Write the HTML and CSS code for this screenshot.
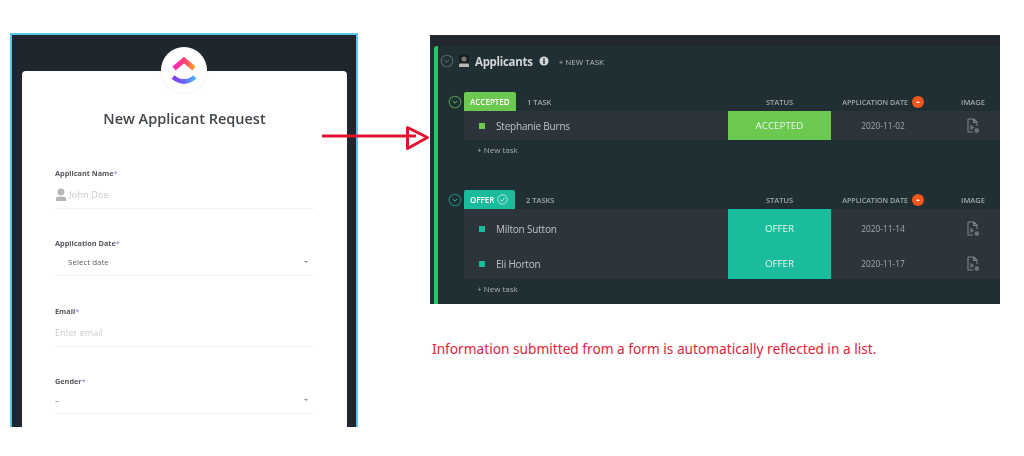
FILE: index.html
```html
<!DOCTYPE html>
<html lang="en">
<head>
    <meta charset="UTF-8">
    <title>New Applicant Request</title>
    <link rel="stylesheet" href="styles.css">
</head>
<body>
    <div class="page">
        <div class="form-window">
            <div class="card">
                <div class="logo">
                    <svg width="30" height="34" viewBox="0 0 30 34">
                        <defs>
                            <linearGradient id="logoTop" x1="0" y1="0" x2="1" y2="0">
                                <stop offset="0" stop-color="#f92bc4"/>
                                <stop offset="0.55" stop-color="#ff3d6e"/>
                                <stop offset="1" stop-color="#ffa02a"/>
                            </linearGradient>
                            <linearGradient id="logoBottom" x1="0" y1="0" x2="1" y2="0">
                                <stop offset="0" stop-color="#8a3ff0"/>
                                <stop offset="0.5" stop-color="#6b63f6"/>
                                <stop offset="1" stop-color="#4cb6fb"/>
                            </linearGradient>
                        </defs>
                        <path d="M5 15.5 L15 7 L25 15.5" fill="none" stroke="url(#logoTop)" stroke-width="5"/>
                        <path d="M4 24 Q15 33 26 24" fill="none" stroke="url(#logoBottom)" stroke-width="4.6"/>
                    </svg>
                </div>
                <h1>New Applicant Request</h1>

                <div class="form-group first">
                    <label>Applicant Name<span class="req">*</span></label>
                    <div class="field placeholder name">
                        <svg class="person" width="12" height="13" viewBox="0 0 12 13">
                            <circle cx="6" cy="4" r="3.4" fill="#b5b5b5"/>
                            <path d="M1 13 V10.4 Q1 8.8 3 8.8 H9 Q11 8.8 11 10.4 V13 Z" fill="#b5b5b5"/>
                        </svg>
                        John Doe
                    </div>
                </div>
                <div class="form-group date">
                    <label>Application Date<span class="req">*</span></label>
                    <div class="field select indented">Select date <span class="caret"></span></div>
                </div>
                <div class="form-group email">
                    <label>Email<span class="req">*</span></label>
                    <div class="field placeholder">Enter email</div>
                </div>
                <div class="form-group gender">
                    <label>Gender<span class="req">*</span></label>
                    <div class="field select">– <span class="caret"></span></div>
                </div>
            </div>
        </div>

        <div class="right-col">
            <div class="list">
                <div class="list-top"></div>
                <div class="list-body">
                    <div class="list-title">
                        <svg class="toggle" width="14" height="14" viewBox="0 0 14 14">
                            <circle cx="7" cy="7" r="5.8" fill="none" stroke="#59666a" stroke-width="1.1"/>
                            <path d="M4.8 6 L7 8.2 L9.2 6" fill="none" stroke="#6d797c" stroke-width="1"/>
                        </svg>
                        <svg class="avatar" width="12" height="14" viewBox="0 0 12 14">
                            <circle cx="6" cy="5" r="5" fill="#161b1e"/>
                            <circle cx="6" cy="5" r="2.6" fill="#7b7470"/>
                            <path d="M1 13 V10.8 Q1 9.4 3 9.4 H9 Q11 9.4 11 10.8 V13 Z" fill="#b9b9b6"/>
                        </svg>
                        <span class="list-name">Applicants</span>
                        <svg class="info" width="10" height="10" viewBox="0 0 10 10">
                            <circle cx="5" cy="5" r="4.6" fill="#cfd3d4"/>
                            <rect x="4.2" y="4.2" width="1.6" height="3.6" fill="#263236"/>
                            <rect x="4.2" y="2.2" width="1.6" height="1.4" fill="#263236"/>
                        </svg>
                        <span class="new-task-top">+ NEW TASK</span>
                    </div>

                    <div class="group accepted">
                        <div class="group-head">
                            <svg class="group-toggle" width="14" height="14" viewBox="0 0 14 14">
                                <circle cx="7" cy="7" r="5.8" fill="none" stroke="#4f9a45" stroke-width="1.1"/>
                                <path d="M4.8 6 L7 8.2 L9.2 6" fill="none" stroke="#6bc950" stroke-width="1"/>
                            </svg>
                            <span class="badge">ACCEPTED</span>
                            <span class="count">1 TASK</span>
                            <span class="col-status">STATUS</span>
                            <span class="col-date">APPLICATION DATE <i class="sort"></i></span>
                            <span class="col-image">IMAGE</span>
                        </div>
                        <div class="row short">
                            <span class="task"><i class="dot"></i>Stephanie Burns</span>
                            <span class="status">ACCEPTED</span>
                            <span class="date-val">2020-11-02</span>
                            <span class="image-val">
                                <svg width="13" height="16" viewBox="0 0 13 16"><path d="M1 1 H7 L10 4 V8 M6 14 H1 V1 M6.6 1.2 V4.4 H9.8" fill="none" stroke="#7e8489" stroke-width="1.1"/><path d="M3.4 6.4 L7.4 9.8 L3.4 12 Z" fill="#6c7277"/><circle cx="9.8" cy="12.6" r="2.4" fill="#6c7277"/></svg>
                            </span>
                        </div>
                        <div class="new-task">+ New task</div>
                    </div>

                    <div class="group offer">
                        <div class="group-head">
                            <svg class="group-toggle" width="14" height="14" viewBox="0 0 14 14">
                                <circle cx="7" cy="7" r="5.8" fill="none" stroke="#1a8a76" stroke-width="1.1"/>
                                <path d="M4.8 6 L7 8.2 L9.2 6" fill="none" stroke="#1abc9c" stroke-width="1"/>
                            </svg>
                            <span class="badge">OFFER
                                <svg width="11" height="11" viewBox="0 0 11 11"><circle cx="5.5" cy="5.5" r="4.7" fill="none" stroke="#cfeee7" stroke-width="0.9"/><path d="M3.4 5.8 L5 7.2 L7.6 3.9" fill="none" stroke="#cfeee7" stroke-width="0.9"/></svg>
                            </span>
                            <span class="count">2 TASKS</span>
                            <span class="col-status">STATUS</span>
                            <span class="col-date">APPLICATION DATE <i class="sort"></i></span>
                            <span class="col-image">IMAGE</span>
                        </div>
                        <div class="row tall">
                            <span class="task"><i class="dot"></i>Milton Sutton</span>
                            <span class="status">OFFER</span>
                            <span class="date-val">2020-11-14</span>
                            <span class="image-val">
                                <svg width="13" height="16" viewBox="0 0 13 16"><path d="M1 1 H7 L10 4 V8 M6 14 H1 V1 M6.6 1.2 V4.4 H9.8" fill="none" stroke="#7e8489" stroke-width="1.1"/><path d="M3.4 6.4 L7.4 9.8 L3.4 12 Z" fill="#6c7277"/><circle cx="9.8" cy="12.6" r="2.4" fill="#6c7277"/></svg>
                            </span>
                        </div>
                        <div class="row">
                            <span class="task"><i class="dot"></i>Eli Horton</span>
                            <span class="status">OFFER</span>
                            <span class="date-val">2020-11-17</span>
                            <span class="image-val">
                                <svg width="13" height="16" viewBox="0 0 13 16"><path d="M1 1 H7 L10 4 V8 M6 14 H1 V1 M6.6 1.2 V4.4 H9.8" fill="none" stroke="#7e8489" stroke-width="1.1"/><path d="M3.4 6.4 L7.4 9.8 L3.4 12 Z" fill="#6c7277"/><circle cx="9.8" cy="12.6" r="2.4" fill="#6c7277"/></svg>
                            </span>
                        </div>
                        <div class="new-task">+ New task</div>
                    </div>
                </div>
            </div>
            <p class="caption">Information submitted from a form is automatically reflected in a list.</p>
        </div>

        <svg class="arrow" width="112" height="30" viewBox="0 0 112 30">
            <path d="M0 11 H94" fill="none" stroke="#e3132f" stroke-width="3"/>
            <path d="M85.5 2.5 L105.5 12.5 L85.5 23.5 Z" fill="none" stroke="#e3132f" stroke-width="3" stroke-linejoin="round"/>
        </svg>
    </div>
</body>
</html>
```

FILE: styles.css
```css
html, body {
    margin: 0;
    padding: 0;
    background-color: white;
}
.page {
    position: relative;
    display: flex;
    align-items: flex-start;
    height: 456px;
    padding: 33px 0 0 10px;
    box-sizing: border-box;
    font-family: "Open Sans", "Noto Sans", sans-serif;
    overflow: hidden;
}

/* form on the left */
.form-window {
    flex: none;
    width: 348px;
    height: 394px;
    box-sizing: border-box;
    padding: 36px 9px 0 10px;
    background-color: #1f262e;
    border: solid #58c6f0;
    border-width: 2px 2px 0 2px;
    filter: blur(0.3px);
}
.card {
    position: relative;
    height: 100%;
    background-color: white;
    border-radius: 4px 4px 0 0;
    padding: 0 33px;
    box-sizing: border-box;
}
.logo {
    position: absolute;
    left: 139px;
    top: -24px;
    width: 46px;
    height: 46px;
    border-radius: 50%;
    background-color: white;
    box-shadow: 0 0 2px rgba(0, 0, 0, 0.15);
    display: flex;
    align-items: center;
    justify-content: center;
}
h1 {
    margin: 0;
    padding-top: 38px;
    text-align: center;
    font-size: 14.5px;
    line-height: 20px;
    font-weight: 600;
    color: #40464c;
}
.form-group label {
    display: block;
    font-size: 7.3px;
    line-height: 11px;
    font-weight: 700;
    color: #54585e;
}
.req {
    color: #a9a0e8;
}
.form-group.first { margin-top: 38.5px; }
.form-group.date { margin-top: 29px; }
.form-group.email { margin-top: 30px; }
.form-group.gender { margin-top: 29px; }
.field {
    display: flex;
    align-items: center;
    height: 30px;
    box-sizing: border-box;
    border-bottom: 1px solid #f0f1f2;
    font-size: 9px;
    color: #5f6368;
}
.field.select {
    justify-content: space-between;
    height: 27px;
    padding-right: 6px;
    font-size: 8px;
}
.field.indented {
    padding-left: 13px;
}
.field.placeholder {
    padding-top: 2px;
    color: #c9cbcd;
}
.field.name {
    font-size: 9.4px;
}
.person {
    margin-right: 2px;
}
.caret {
    width: 0;
    height: 0;
    border: 2px solid transparent;
    border-top: 2px solid #8a8a8a;
    border-bottom: 0;
}

/* list on the right */
.right-col {
    flex: none;
    width: 570px;
    margin: 2px 0 0 72px;
}
.list {
    height: 269px;
    background-color: #202f33;
    filter: blur(0.3px);
}
.list-top {
    height: 11px;
    background-color: #20272e;
}
.list-body {
    height: 258px;
    box-sizing: border-box;
    margin-left: 4px;
    border-left: 4px solid #25cb62;
    border-radius: 3px 0 0 0;
}
.list-title {
    display: flex;
    align-items: center;
    height: 30px;
    padding-left: 2px;
}
.avatar {
    margin-left: 4px;
}
.list-name {
    margin-left: 5px;
    font-size: 11.5px;
    font-weight: 700;
    letter-spacing: -0.3px;
    color: #d3d6d7;
}
.info {
    margin-left: 6px;
}
.new-task-top {
    margin-left: 10px;
    font-size: 8px;
    color: #b4babc;
}
.accepted {
    margin-top: 16px;
}
.offer {
    margin-top: 30px;
}
.group-head {
    display: flex;
    align-items: center;
    height: 19px;
    font-size: 7.5px;
    font-weight: 600;
    color: #a3aaad;
}
.group-head > * {
    flex: none;
}
.group-toggle {
    margin-left: 10px;
    margin-right: 2px;
}
.badge {
    display: flex;
    align-items: center;
    gap: 3px;
    height: 19px;
    box-sizing: border-box;
    padding: 0 6px;
    border-radius: 2px 2px 0 0;
    font-size: 8px;
    font-weight: 600;
    color: white;
}
.accepted .badge {
    width: 52px;
    background-color: #6bc950;
}
.offer .badge {
    width: 51px;
    background-color: #1abc9c;
}
.count {
    width: 201px;
    margin-left: 11px;
}
.offer .count {
    width: 202px;
}
.col-status {
    width: 103px;
    text-align: center;
}
.col-date {
    display: flex;
    align-items: center;
    justify-content: center;
    gap: 2px;
    width: 104px;
    padding-right: 12px;
    font-size: 7.1px;
    white-space: pre;
}
.col-image {
    width: 52px;
    text-align: center;
}
.sort {
    display: flex;
    align-items: center;
    justify-content: center;
    width: 12px;
    height: 12px;
    border-radius: 50%;
    background-color: #f2561d;
}
.sort::after {
    content: "";
    border: 2px solid transparent;
    border-top: 0;
    border-bottom: 2px solid white;
}
.row {
    display: flex;
    align-items: center;
    height: 31px;
    margin-left: 26px;
    background-color: #2d343c;
    font-size: 8.3px;
    color: #a4a9ad;
}
.row + .row {
    box-shadow: inset 0 1px #2a3138;
}
.row.tall {
    height: 39px;
}
.row.short {
    height: 29px;
}
.task {
    flex: none;
    display: flex;
    align-items: center;
    width: 264px;
    box-sizing: border-box;
    padding-left: 15px;
    font-size: 10px;
    letter-spacing: -0.2px;
    color: #c0c3c6;
}
.dot {
    width: 6px;
    height: 6px;
    margin-right: 11px;
    background-color: #6bc950;
}
.offer .dot {
    background-color: #1abc9c;
}
.status {
    flex: none;
    align-self: stretch;
    display: flex;
    align-items: center;
    justify-content: center;
    width: 103px;
    font-size: 9.8px;
    font-weight: 500;
    color: #eef5ee;
}
.accepted .status {
    background-color: #6bc950;
}
.offer .status {
    background-color: #1abc9c;
}
.date-val {
    flex: none;
    width: 104px;
    padding-right: 12px;
    text-align: center;
}
.image-val {
    flex: none;
    display: flex;
    justify-content: center;
    width: 52px;
}
.new-task {
    margin-left: 39px;
    height: 20px;
    line-height: 20px;
    font-size: 8px;
    color: #a8afb2;
}
.caption {
    margin: 35px 0 0 2px;
    font-family: "Noto Sans", sans-serif;
    font-size: 13.7px;
    line-height: 20px;
    color: #dc1f3c;
}

/* arrow sits over both the form and the list */
.arrow {
    position: absolute;
    left: 322px;
    top: 125px;
}
```
